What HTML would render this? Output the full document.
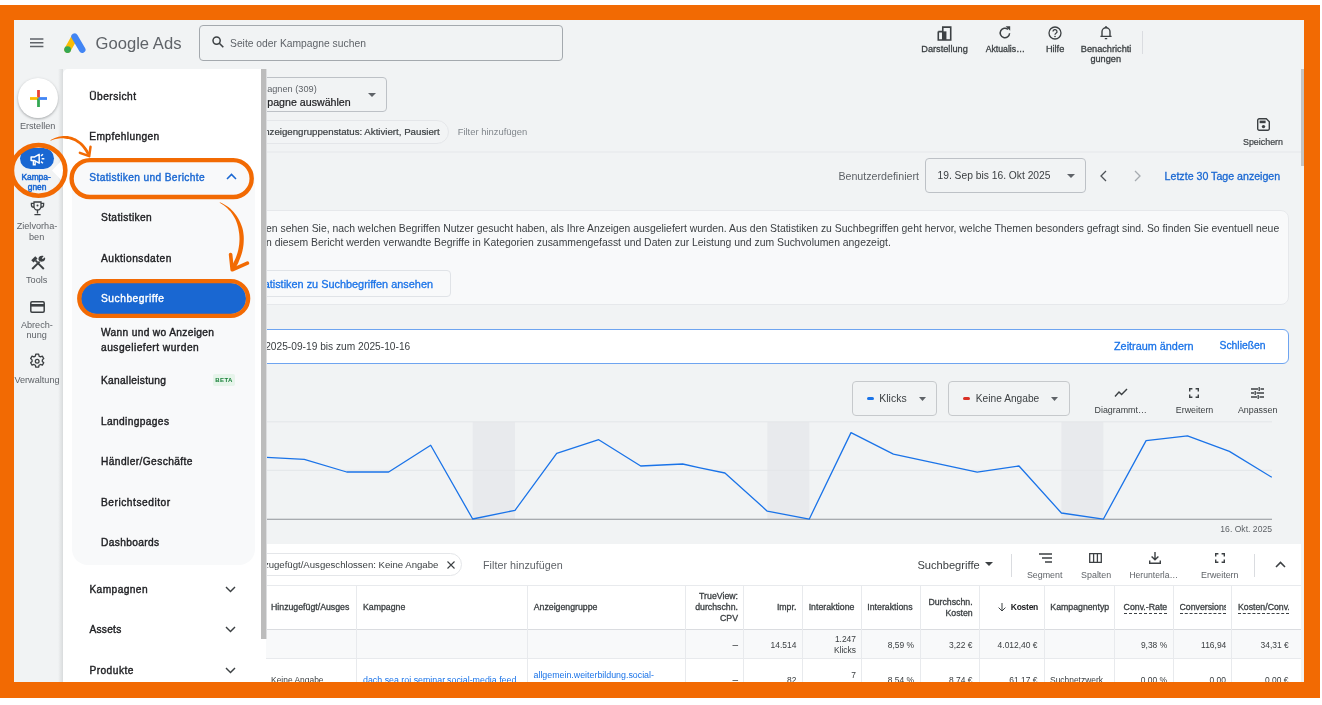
<!DOCTYPE html>
<html lang="de">
<head>
<meta charset="utf-8">
<title>Google Ads – Suchbegriffe</title>
<style>
*{box-sizing:border-box;margin:0;padding:0}
html,body{width:1322px;height:705px;overflow:hidden;background:#fff}
body{font-family:"Liberation Sans",sans-serif;color:#3c4043;position:relative}
#frame{position:absolute;left:0;top:5px;width:1320px;height:693px;background:#f26a03}
#app{position:absolute;left:14px;top:20px;width:1290px;height:662px;background:#f1f3f4;overflow:hidden}
/* coordinates inside #app are page coords shifted by (-14,-20); use wrapper to keep page coords */
#pg{position:absolute;left:-14px;top:-20px;width:1322px;height:705px;will-change:transform}
.a{position:absolute}
.t{position:absolute;white-space:nowrap;line-height:14px;height:14px}
.m{-webkit-text-stroke:0.3px currentColor}
.mp{-webkit-text-stroke:0.38px currentColor}
.m2{-webkit-text-stroke:0.5px currentColor}
.m3{-webkit-text-stroke:0.2px currentColor}
.r{text-align:right}
.c{text-align:center}
svg{position:absolute;overflow:visible}
</style>
</head>
<body>
<div id="frame"></div>
<div id="app"><div id="pg">

<!-- ===== header ===== -->
<div id="header">
  <svg style="left:30.300px;top:38px" width="14" height="10" viewBox="0 0 14 10"><path d="M0 1h13.400M0 4.700h13.400M0 8.400h13.400" stroke="#5f6368" stroke-width="1.500" fill="none"/></svg>
  <svg id="logo" style="left:63.200px;top:31.800px" width="24" height="22" viewBox="0 0 24 22">
    <path d="M4.6 17.6 L11.2 6" stroke="#fbbc04" stroke-width="6.6" stroke-linecap="round" fill="none"/>
    <path d="M11.6 4.6 L19.2 17.6" stroke="#4285f4" stroke-width="6.6" stroke-linecap="round" fill="none"/>
    <circle cx="4.6" cy="17.6" r="3.4" fill="#34a853"/>
  </svg>
  <div class="t" id="brand" style="left:95.5px;top:30.7px;font-size:16.63px;line-height:26px;height:26px;color:#5f6368;width:auto;text-align:left;letter-spacing:0.01px">Google Ads</div>
  <div class="a" id="search" style="left:199px;top:25px;width:364px;height:36px;border:1px solid #a4a9ae;border-radius:4px"></div>
  <svg style="left:212px;top:36px" width="12" height="12" viewBox="0 0 12 12"><circle cx="4.6" cy="4.6" r="3.6" stroke="#3c4043" stroke-width="1.5" fill="none"/><path d="M7.3 7.3 L11.3 11.3" stroke="#3c4043" stroke-width="1.6"/></svg>
  <div class="t" id="searchph" style="left:230.0px;top:37px;font-size:10.32px;color:#5f6368;width:auto;text-align:left;letter-spacing:0.00px">Seite oder Kampagne suchen</div>
</div>


<!-- ===== header right icons ===== -->
<div id="hdr-icons">
  <svg style="left:936.500px;top:25.500px" width="15" height="15" viewBox="0 0 14 14"><path d="M1.2 5.2h4.2M1.2 5.2V13h11.6V1H5.4v12" stroke="#3c4043" stroke-width="1.5" fill="none"/><path d="M5.4 1h7.4v12H5.4z" fill="#3c4043" opacity=".0"/><rect x="5.4" y="5" width="3.4" height="8" fill="#3c4043"/></svg>
  <div class="t c m" id="h1" style="left:921.3px;width:auto;top:42px;font-size:9.2px;color:#3c4043;text-align:left;letter-spacing:0px">Darstellung</div>
  <svg style="left:998px;top:26px" width="14" height="14" viewBox="0 0 14 14"><path d="M11.6 7.3A4.7 4.7 0 1 1 10 3.4" stroke="#3c4043" stroke-width="1.5" fill="none"/><path d="M7.600.200h4.600v4.600z" fill="#3c4043"/></svg>
  <div class="t c m" id="h2" style="left:985.7px;width:auto;top:42px;font-size:8.69px;color:#3c4043;text-align:left;letter-spacing:0.01px">Aktualis…</div>
  <svg style="left:1048px;top:26px" width="14" height="14" viewBox="0 0 14 14"><circle cx="7" cy="7" r="6" stroke="#3c4043" stroke-width="1.3" fill="none"/><path d="M5 5.6a2 2 0 1 1 3 1.7c-.7.4-1 .8-1 1.5" stroke="#3c4043" stroke-width="1.3" fill="none"/><circle cx="7" cy="10.5" r=".8" fill="#3c4043"/></svg>
  <div class="t c m" id="h3" style="left:1045.9px;width:auto;top:42px;font-size:9.2px;color:#3c4043;text-align:left;letter-spacing:0px">Hilfe</div>
  <svg style="left:1099px;top:25px" width="14" height="16" viewBox="0 0 14 16"><path d="M3 11V6.8a4 4 0 0 1 8 0V11M1.4 11.4h11.2" stroke="#3c4043" stroke-width="1.4" fill="none"/><path d="M7 1v2M5.8 13.6h2.4" stroke="#3c4043" stroke-width="1.4"/></svg>
  <div class="t c m" id="h4" style="left:1080.8px;width:auto;top:42px;font-size:9.2px;color:#3c4043;text-align:left;letter-spacing:0px">Benachrichti</div>
  <div class="t c m" id="h5" style="left:1090.4px;width:auto;top:52px;font-size:9.2px;color:#3c4043;text-align:left;letter-spacing:0px">gungen</div>
  <div class="a" style="left:1142px;top:31px;width:1px;height:23px;background:#dadce0"></div>
</div>

<!-- ===== left rail ===== -->
<div id="rail">
  <div class="a" style="left:58px;top:69px;width:5px;height:613px;background:linear-gradient(to right,rgba(60,64,67,0),rgba(60,64,67,.13))"></div>
  <div class="a" id="create" style="left:18px;top:78px;width:40px;height:40px;border-radius:50%;background:#fff;box-shadow:0 1px 3px rgba(60,64,67,.3),0 1px 2px rgba(60,64,67,.15)"></div>
  <svg style="left:29.500px;top:89.500px" width="17" height="17" viewBox="0 0 17 17"><path d="M7.100 0h2.800v8.500H7.100z" fill="#ea4335"/><path d="M0 7.100h8.500v2.800H0z" fill="#fbbc04"/><path d="M7.100 8.500h2.800V17H7.100z" fill="#34a853"/><path d="M8.500 7.100H17v2.800H8.500z" fill="#4285f4"/></svg>
  <div class="t c" id="r1" style="left:19.9px;width:auto;top:119px;font-size:9.15px;color:#5f6368;text-align:left;letter-spacing:0px">Erstellen</div>

  <div class="a" style="left:20px;top:148px;width:34px;height:21px;border-radius:11px;background:#1967d2"></div>
  <svg style="left:29.500px;top:151.800px" width="16.800" height="14.600" viewBox="0 0 15 13"><path d="M1 4.4h3.2L8.2 2v8L4.2 7.6H1z" stroke="#fff" stroke-width="1.3" fill="none" stroke-linejoin="round"/><path d="M3 8v3.4h1.6V8" stroke="#fff" stroke-width="1.2" fill="none"/><path d="M10.4 6h2.4M9.8 3.4l1.8-1.4M9.8 8.6l1.8 1.4" stroke="#fff" stroke-width="1.3"/></svg>
  <div class="t c m2" id="r2" style="left:21.4px;width:auto;top:169.8px;font-size:8.4px;color:#1967d2;text-align:left;letter-spacing:0px">Kampa-</div>
  <div class="t c m2" id="r3" style="left:27.8px;width:auto;top:180.3px;font-size:8.4px;color:#1967d2;text-align:left;letter-spacing:0px">gnen</div>
  <svg style="left:0;top:0" width="70" height="200" viewBox="0 0 70 200"><path d="M63.500 158.500L52 170.400 63.500 182.300z" fill="#fff"/></svg>

  <svg style="left:30px;top:201px" width="15" height="16" viewBox="0 0 15 16"><path d="M4 1h7v4.5a3.5 3.5 0 0 1-7 0zM4 2.4H1.4v1.4A2.6 2.6 0 0 0 4 6.4M11 2.4h2.6v1.4A2.6 2.6 0 0 1 11 6.4M7.5 9v3.4M4.4 13.6h6.2" stroke="#3c4043" stroke-width="1.3" fill="none"/><circle cx="7.5" cy="4.6" r="1" fill="#3c4043"/></svg>
  <div class="t c" id="r4" style="left:16.7px;width:auto;top:219px;font-size:9.15px;color:#5f6368;text-align:left;letter-spacing:0px">Zielvorha-</div>
  <div class="t c" id="r5" style="left:29.0px;width:auto;top:230px;font-size:9.15px;color:#5f6368;text-align:left;letter-spacing:0px">ben</div>

  <svg style="left:29.500px;top:255px" width="16" height="16" viewBox="0 0 16 16"><path d="M2.200 14L9.600 6.600" stroke="#3c4043" stroke-width="1.900" fill="none"/><path d="M9 4.200a2.900 2.900 0 0 1 3.800-2.800L11 3.200l1.800 1.800 1.800-1.800A2.900 2.900 0 0 1 9 4.200z" fill="#3c4043" stroke="#3c4043" stroke-width="1.200" stroke-linejoin="round"/><path d="M13.800 14L7.400 7.600" stroke="#3c4043" stroke-width="1.900" fill="none"/><path d="M2.400 6.400l4-4" stroke="#3c4043" stroke-width="3.200" fill="none"/><path d="M5.400 5.400l2 2" stroke="#3c4043" stroke-width="1.900"/></svg>
  <div class="t c" id="r6" style="left:26.0px;width:auto;top:273px;font-size:9.15px;color:#5f6368;text-align:left;letter-spacing:0px">Tools</div>

  <svg style="left:30px;top:301px" width="15" height="12" viewBox="0 0 15 12"><rect x=".8" y=".8" width="13.4" height="10.4" rx="1.2" stroke="#3c4043" stroke-width="1.5" fill="none"/><rect x=".8" y="3" width="13.4" height="2.6" fill="#3c4043"/></svg>
  <div class="t c" id="r7" style="left:20.9px;width:auto;top:318px;font-size:9.15px;color:#5f6368;text-align:left;letter-spacing:0px">Abrech-</div>
  <div class="t c" id="r8" style="left:26.5px;width:auto;top:328px;font-size:9.15px;color:#5f6368;text-align:left;letter-spacing:0px">nung</div>

  <svg style="left:29.300px;top:353.300px" width="16.400" height="16.400" viewBox="0 0 15 15"><path d="M6.2 1h2.6l.4 1.8 1.3.7 1.7-.6 1.3 2.2-1.3 1.2v1.4l1.3 1.2-1.3 2.2-1.7-.6-1.3.7-.4 1.8H6.200l-.4-1.800-1.300-.7-1.700.6-1.300-2.200 1.300-1.200V6.300L1.500 5.100l1.300-2.200 1.700.6 1.300-.7z" stroke="#3c4043" stroke-width="1.2" fill="none" stroke-linejoin="round"/><circle cx="7.500" cy="7.500" r="1.700" stroke="#3c4043" stroke-width="1.200" fill="none"/></svg>
  <div class="t c" id="r9" style="left:14.4px;width:auto;top:373px;font-size:9.15px;color:#5f6368;text-align:left;letter-spacing:0px">Verwaltung</div>
</div>



<!-- ===== main content ===== -->
<div id="main">
  <!-- page scrollbar -->
  <div class="a" style="left:1301px;top:69px;width:3px;height:97px;background:#c4c4c4"></div>

  <!-- campaign selector -->
  <div class="a" style="left:200px;top:77px;width:187px;height:35px;border:1px solid #bdc1c6;border-radius:4px"></div>
  <div class="t" id="c1" style="left:auto;top:82px;font-size:9.2px;color:#5f6368;right:1005.3px">Kampagnen (309)</div>
  <div class="t m3" id="c2" style="left:auto;top:94.5px;font-size:10.65px;color:#202124;right:971.3px">Kampagne auswählen</div>
  <svg style="left:368px;top:93px" width="8" height="4" viewBox="0 0 8 4"><path d="M0 0h8L4 4z" fill="#5f6368"/></svg>

  <!-- filter row -->
  <div class="a" style="left:180px;top:120px;width:269px;height:24px;border:1px solid #e4e6e9;border-radius:12px;background:#f2f4f5"></div>
  <div class="t m3" id="f1" style="left:auto;top:125px;font-size:9.7px;color:#3c4043;right:882.3px">Anzeigengruppenstatus: Aktiviert, Pausiert</div>
  <div class="t" id="f2" style="left:457.7px;top:125px;font-size:9.41px;color:#80868b;width:auto;text-align:left;letter-spacing:0.00px">Filter hinzufügen</div>
  <svg style="left:1257px;top:118px" width="13" height="13" viewBox="0 0 13 13"><path d="M1.600.8h7.800l2.800 2.800v7a1.600 1.600 0 0 1-1.600 1.600H1.600" stroke="#3c4043" stroke-width="0" fill="none"/><path d="M2.200.7h7.100l3 3v7.100a1.500 1.500 0 0 1-1.500 1.500H2.200A1.500 1.500 0 0 1 .7 10.800V2.200A1.500 1.500 0 0 1 2.200.7z" stroke="#3c4043" stroke-width="1.400" fill="none"/><rect x="2.600" y="2.600" width="6" height="2.600" fill="#3c4043"/><circle cx="6.500" cy="8.600" r="1.700" fill="#3c4043"/></svg>
  <div class="t c m3" id="f3" style="left:1243.0px;width:auto;top:135px;font-size:8.9px;color:#3c4043;text-align:left;letter-spacing:0px">Speichern</div>
  <div class="a" style="left:267px;top:151px;width:1034px;height:2px;background:#ebedef"></div>

  <!-- date row -->
  <div class="t r" id="d1" style="left:838.4px;width:auto;top:169px;font-size:10.66px;color:#5f6368;text-align:left;letter-spacing:0.00px">Benutzerdefiniert</div>
  <div class="a" style="left:925px;top:158px;width:161px;height:35px;border:1px solid #bdc1c6;border-radius:4px"></div>
  <div class="t" id="d2" style="left:937.5px;top:169px;font-size:10.27px;color:#3c4043;width:auto;text-align:left;letter-spacing:0.00px">19. Sep bis 16. Okt 2025</div>
  <svg style="left:1067px;top:174px" width="8" height="4" viewBox="0 0 8 4"><path d="M0 0h8L4 4z" fill="#5f6368"/></svg>
  <svg style="left:1100px;top:170px" width="7" height="12" viewBox="0 0 7 12"><path d="M6 1L1 6l5 5" stroke="#4d5156" stroke-width="1.300" fill="none"/></svg>
  <svg style="left:1134px;top:170px" width="7" height="12" viewBox="0 0 7 12"><path d="M1 1l5 5-5 5" stroke="#a6abb0" stroke-width="1.300" fill="none"/></svg>
  <div class="t m" id="d3" style="left:1164.6px;top:169px;font-size:10.63px;color:#1967d2;width:auto;text-align:left;letter-spacing:0.00px">Letzte 30 Tage anzeigen</div>

  <!-- info card -->
  <div class="a" style="left:200px;top:210px;width:1089px;height:95px;border:1px solid #e6e8eb;border-radius:8px;background:#f8f9fa"></div>
  <div class="t" id="i1" style="left:266.0px;top:222px;font-size:10.4px;color:#3c4043;width:auto;text-align:left;letter-spacing:0px">en sehen Sie, nach welchen Begriffen Nutzer gesucht haben, als Ihre Anzeigen ausgeliefert wurden. Aus den Statistiken zu Suchbegriffen geht hervor, welche Themen besonders gefragt sind. So finden Sie eventuell neue</div>
  <div class="t" id="i2" style="left:266.0px;top:236px;font-size:10.4px;color:#3c4043;width:auto;text-align:left;letter-spacing:0px">n diesem Bericht werden verwandte Begriffe in Kategorien zusammengefasst und Daten zur Leistung und zum Suchvolumen angezeigt.</div>
  <div class="a" style="left:200px;top:270px;width:250.500px;height:27px;border:1px solid #e0e3e7;border-radius:4px"></div>
  <div class="t m" id="i3" style="left:auto;top:277px;font-size:10.9px;color:#1a73e8;right:889.0px">Statistiken zu Suchbegriffen ansehen</div>

  <!-- compare bar -->
  <div class="a" style="left:200px;top:329px;width:1089px;height:35px;border:1px solid #6ea4f0;border-radius:6px;background:#fff"></div>
  <div class="t" id="b1" style="left:265.2px;top:339.7px;font-size:10.19px;color:#3c4043;width:auto;text-align:left;letter-spacing:0.01px">2025-09-19 bis zum 2025-10-16</div>
  <div class="t m" id="b2" style="left:1114.0px;top:339px;font-size:10.85px;color:#1a73e8;width:auto;text-align:left;letter-spacing:0.00px">Zeitraum ändern</div>
  <div class="t m" id="b3" style="left:1219.5px;top:339px;font-size:10.36px;color:#1a73e8;width:auto;text-align:left;letter-spacing:0.00px">Schließen</div>

  <!-- chart controls -->
  <div class="a" style="left:852px;top:381px;width:85px;height:35px;border:1px solid #c6c9cc;border-radius:4px"></div>
  <div class="a" style="left:867px;top:397px;width:7px;height:3px;border-radius:1.500px;background:#1a73e8"></div>
  <div class="t" id="k1" style="left:879.3px;top:391.500px;font-size:10.45px;color:#3c4043;width:auto;text-align:left;letter-spacing:0.01px">Klicks</div>
  <svg style="left:918.500px;top:397px" width="7" height="4" viewBox="0 0 7 4"><path d="M0 0h7L3.500 4z" fill="#5f6368"/></svg>
  <div class="a" style="left:948px;top:381px;width:121.500px;height:35px;border:1px solid #c6c9cc;border-radius:4px"></div>
  <div class="a" style="left:962.500px;top:397px;width:7px;height:3px;border-radius:1.500px;background:#d93025"></div>
  <div class="t" id="k2" style="left:975.8px;top:391.500px;font-size:10.19px;color:#3c4043;width:auto;text-align:left;letter-spacing:0.01px">Keine Angabe</div>
  <svg style="left:1051px;top:397px" width="7" height="4" viewBox="0 0 7 4"><path d="M0 0h7L3.500 4z" fill="#5f6368"/></svg>

  <svg style="left:1114px;top:388px" width="14" height="10" viewBox="0 0 14 10"><path d="M1 8.500l4-4.500 2.600 2.600L13 1" stroke="#3c4043" stroke-width="1.400" fill="none"/></svg>
  <div class="t c" id="k3" style="left:1094.5px;width:auto;top:403px;font-size:8.9px;color:#3c4043;text-align:left;letter-spacing:0px">Diagrammt…</div>
  <svg style="left:1189px;top:388px" width="10" height="10" viewBox="0 0 10 10"><path d="M.700 3.400V.700h2.700M6.600.700h2.700v2.700M9.300 6.600v2.700H6.600M3.400 9.300H.700V6.600" stroke="#3c4043" stroke-width="1.400" fill="none"/></svg>
  <div class="t c" id="k4" style="left:1175.8px;width:auto;top:403px;font-size:8.9px;color:#3c4043;text-align:left;letter-spacing:0px">Erweitern</div>
  <svg style="left:1251px;top:387px" width="13" height="12" viewBox="0 0 13 12"><path d="M0 2h7M9.500 2H13M0 6h3M5.500 6H13M0 10h6M8.500 10H13M8.200 0v4M4.200 4v4M7.200 8v4" stroke="#3c4043" stroke-width="1.300" fill="none"/></svg>
  <div class="t c" id="k5" style="left:1237.9px;width:auto;top:403px;font-size:8.9px;color:#3c4043;text-align:left;letter-spacing:0px">Anpassen</div>

  <!-- chart -->
  <svg id="chart" style="left:0;top:0" width="1322" height="705" viewBox="0 0 1322 705">
    <rect x="472.700" y="422" width="42.300" height="97" fill="#e8eaed"/>
    <rect x="767.300" y="422" width="42" height="97" fill="#e8eaed"/>
    <rect x="1061.400" y="422" width="42" height="97" fill="#e8eaed"/>
    <path d="M200 421.800H1272M200 470.300H1272" stroke="#e3e5e8" stroke-width="1"/>
    <path d="M200 519.200H1272" stroke="#8f9398" stroke-width="1.100"/>
    <polyline fill="none" stroke="#1a73e8" stroke-width="1.300" stroke-linejoin="round" points="224,455 266.700,457.300 304.300,459.300 346.700,472 388.700,472 430.700,445.300 472.700,519 515,510.300 556.700,453.300 598.700,439.700 640.700,466 682.700,464 700,467.800 724.900,473 767.300,511.200 809.200,519.200 851,432.600 893.400,454.200 935.300,463.200 977.200,472.100 1019,466 1061.400,513 1103.300,519.200 1146.100,440.600 1187.500,435.900 1229.400,451.400 1271.800,477.300"/>
  </svg>
  <div class="t r" id="ch1" style="left:1220.3px;width:auto;top:521.500px;font-size:8.61px;color:#5f6368;text-align:left;letter-spacing:0.01px">16. Okt. 2025</div>

  <!-- table -->
  <div class="a" style="left:200px;top:543.500px;width:1101px;height:140px;background:#fff"></div>
  <div class="a" style="left:200px;top:629px;width:1101px;height:30px;background:#f8f9fa;border-top:1px solid #dadce0;border-bottom:1px solid #e8eaed"></div>
  <div class="a" style="left:200px;top:585px;width:1101px;height:1px;background:#e8eaed"></div>

  <!-- table toolbar -->
  <div class="a" style="left:200px;top:553px;width:262px;height:23px;border:1px solid #e4e6e9;border-radius:12px;background:#fff"></div>
  <div class="t" id="tb1" style="left:auto;top:557.500px;font-size:9.6px;color:#3c4043;right:883.7px">Hinzugefügt/Ausgeschlossen: Keine Angabe</div>
  <svg style="left:447px;top:561px" width="8" height="8" viewBox="0 0 8 8"><path d="M.500.500l7 7M7.500.500l-7 7" stroke="#3c4043" stroke-width="1.100"/></svg>
  <div class="t" id="tb2" style="left:483.0px;top:557.500px;font-size:10.78px;color:#5f6368;width:auto;text-align:left;letter-spacing:0.01px">Filter hinzufügen</div>
  <div class="t" id="tb3" style="left:917.4px;top:557.500px;font-size:11.13px;color:#3c4043;width:auto;text-align:left;letter-spacing:0.00px">Suchbegriffe</div>
  <svg style="left:985px;top:562px" width="8" height="4" viewBox="0 0 8 4"><path d="M0 0h8L4 4z" fill="#3c4043"/></svg>
  <div class="a" style="left:1011px;top:553.500px;width:1px;height:23px;background:#dadce0"></div>
  <svg style="left:1039px;top:553px" width="13" height="10" viewBox="0 0 13 10"><path d="M0 1h13M3 5h10M6 9h7" stroke="#3c4043" stroke-width="1.400"/></svg>
  <div class="t c" id="tb4" style="left:1026.9px;width:auto;top:567.500px;font-size:8.9px;color:#5f6368;text-align:left;letter-spacing:0px">Segment</div>
  <svg style="left:1089px;top:553px" width="13" height="10" viewBox="0 0 13 10"><path d="M.700.700h11.600v8.600H.700zM4.600.700v8.600M8.400.700v8.600" stroke="#3c4043" stroke-width="1.300" fill="none"/></svg>
  <div class="t c" id="tb5" style="left:1081.1px;width:auto;top:567.500px;font-size:8.9px;color:#5f6368;text-align:left;letter-spacing:0px">Spalten</div>
  <svg style="left:1149px;top:552px" width="12" height="12" viewBox="0 0 12 12"><path d="M6 0v7.500M2.600 4.400L6 7.800l3.400-3.400M.700 8.600v2.600h10.600V8.600" stroke="#3c4043" stroke-width="1.400" fill="none"/></svg>
  <div class="t c" id="tb6" style="left:1129.4px;width:auto;top:567.500px;font-size:8.57px;color:#5f6368;text-align:left;letter-spacing:0.01px">Herunterla…</div>
  <svg style="left:1215px;top:553px" width="10" height="10" viewBox="0 0 10 10"><path d="M.700 3.400V.700h2.700M6.600.700h2.700v2.700M9.300 6.600v2.700H6.600M3.400 9.300H.700V6.600" stroke="#3c4043" stroke-width="1.400" fill="none"/></svg>
  <div class="t c" id="tb7" style="left:1201.0px;width:auto;top:567.500px;font-size:8.9px;color:#5f6368;text-align:left;letter-spacing:0px">Erweitern</div>
  <div class="a" style="left:1254px;top:553.500px;width:1px;height:23px;background:#dadce0"></div>
  <svg style="left:1275px;top:561px" width="11" height="7" viewBox="0 0 11 7"><path d="M1 6l4.500-4.600L10 6" stroke="#3c4043" stroke-width="1.500" fill="none"/></svg>

  <!-- column separators -->
  <div id="vlines">
    <div class="a" style="left:356px;top:585px;width:1px;height:97px;background:#e8eaed"></div>
    <div class="a" style="left:527px;top:585px;width:1px;height:97px;background:#e8eaed"></div>
    <div class="a" style="left:685px;top:585px;width:1px;height:97px;background:#e8eaed"></div>
    <div class="a" style="left:743px;top:585px;width:1px;height:97px;background:#e8eaed"></div>
    <div class="a" style="left:802px;top:585px;width:1px;height:97px;background:#e8eaed"></div>
    <div class="a" style="left:861px;top:585px;width:1px;height:97px;background:#e8eaed"></div>
    <div class="a" style="left:920px;top:585px;width:1px;height:97px;background:#e8eaed"></div>
    <div class="a" style="left:979px;top:585px;width:1px;height:97px;background:#e8eaed"></div>
    <div class="a" style="left:1044px;top:585px;width:1px;height:97px;background:#e8eaed"></div>
    <div class="a" style="left:1114px;top:585px;width:1px;height:97px;background:#e8eaed"></div>
    <div class="a" style="left:1173px;top:585px;width:1px;height:97px;background:#e8eaed"></div>
    <div class="a" style="left:1231px;top:585px;width:1px;height:97px;background:#e8eaed"></div>
  </div>

  <!-- header row -->
  <div class="t m" id="th1" style="left:271.0px;top:600px;font-size:8.75px;color:#3c4043;width:auto;text-align:left;letter-spacing:0px">Hinzugefügt/Ausges</div>
  <div class="t m" id="th2" style="left:363.0px;top:600px;font-size:8.75px;color:#3c4043;width:auto;text-align:left;letter-spacing:0px">Kampagne</div>
  <div class="t m" id="th3" style="left:533.7px;top:600px;font-size:8.75px;color:#3c4043;width:auto;text-align:left;letter-spacing:0px">Anzeigengruppe</div>
  <div class="t m r" id="th4a" style="left:699.1px;width:auto;top:589px;font-size:8.75px;color:#3c4043;text-align:left;letter-spacing:0px">TrueView:</div>
  <div class="t m r" id="th4b" style="left:695.2px;width:auto;top:600px;font-size:8.75px;color:#3c4043;text-align:left;letter-spacing:0px">durchschn.</div>
  <div class="t m r" id="th4c" style="left:720.0px;width:auto;top:611px;font-size:8.75px;color:#3c4043;text-align:left;letter-spacing:0px">CPV</div>
  <div class="t m r" id="th5" style="left:776.9px;width:auto;top:600px;font-size:8.75px;color:#3c4043;text-align:left;letter-spacing:0px">Impr.</div>
  <div class="t m" id="th6" style="left:808.7px;top:600px;font-size:8.75px;color:#3c4043;width:auto;text-align:left;letter-spacing:0px">Interaktione</div>
  <div class="t m" id="th7" style="left:867.3px;top:600px;font-size:8.75px;color:#3c4043;width:auto;text-align:left;letter-spacing:0px">Interaktions</div>
  <div class="t m r" id="th8a" style="left:928.4px;width:auto;top:594.500px;font-size:8.75px;color:#3c4043;text-align:left;letter-spacing:0px">Durchschn.</div>
  <div class="t m r" id="th8b" style="left:945.5px;width:auto;top:605.500px;font-size:8.75px;color:#3c4043;text-align:left;letter-spacing:0px">Kosten</div>
  <svg style="left:998px;top:603px" width="8" height="9" viewBox="0 0 8 9"><path d="M4 0v8M.600 4.600L4 8l3.400-3.400" stroke="#3c4043" stroke-width="1" fill="none"/></svg>
  <div class="t r" id="th9" style="left:auto;width:auto;top:600px;font-size:8.5px;font-weight:bold;color:#202124;text-align:left;letter-spacing:-0.25px;right:283.95px">Kosten</div>
  <div class="t m" id="th10" style="left:1050.3px;top:600px;font-size:8.75px;color:#3c4043;width:auto;text-align:left;letter-spacing:0px">Kampagnentyp</div>
  <div class="t m r" id="th11" style="left:1123.6px;width:auto;top:600px;font-size:8.75px;color:#3c4043;border-bottom:1px dashed #3c4043;text-align:left;letter-spacing:0px">Conv.-Rate</div>
  <div class="t m" id="th12" style="left:1179.5px;top:600px;font-size:8.75px;color:#3c4043;border-bottom:1px dashed #3c4043;width:46.8px;overflow:hidden;letter-spacing:0px">Conversions</div>
  <div class="t m" id="th13" style="left:1238px;top:600px;font-size:8.75px;color:#3c4043;border-bottom:1px dashed #3c4043;width:50.8px;overflow:hidden;letter-spacing:0px">Kosten/Conv.</div>

  <!-- total row -->
  <div class="t r" id="tr1" style="left:638px;width:100px;top:638px;font-size:10px;color:#3c4043;letter-spacing:0px">–</div>
  <div class="t r" id="tr2" style="left:770.6px;width:auto;top:638px;font-size:8.45px;color:#3c4043;text-align:left;letter-spacing:0px">14.514</div>
  <div class="t r" id="tr3a" style="left:756px;width:100px;top:631.500px;font-size:8.45px;color:#3c4043;letter-spacing:0px">1.247</div>
  <div class="t r" id="tr3b" style="left:756px;width:100px;top:642.500px;font-size:8.45px;color:#3c4043;letter-spacing:0px">Klicks</div>
  <div class="t r" id="tr4" style="left:814px;width:100px;top:638px;font-size:8.45px;color:#3c4043;letter-spacing:0px">8,59 %</div>
  <div class="t r" id="tr5" style="left:872.500px;width:100px;top:638px;font-size:8.45px;color:#3c4043;letter-spacing:0px">3,22 €</div>
  <div class="t r" id="tr6" style="left:937.500px;width:100px;top:638px;font-size:8.45px;color:#3c4043;letter-spacing:0px">4.012,40 €</div>
  <div class="t r" id="tr7" style="left:1140.9px;width:auto;top:638px;font-size:8.45px;color:#3c4043;text-align:left;letter-spacing:0px">9,38 %</div>
  <div class="t r" id="tr8" style="left:1201.1px;width:auto;top:638px;font-size:8.45px;color:#3c4043;text-align:left;letter-spacing:0px">116,94</div>
  <div class="t r" id="tr9" style="left:1260.6px;width:auto;top:638px;font-size:8.45px;color:#3c4043;text-align:left;letter-spacing:0px">34,31 €</div>

  <!-- first data row (cut off) -->
  <div class="t" id="td1" style="left:271px;top:673px;font-size:8.45px;color:#3c4043;letter-spacing:0px">Keine Angabe</div>
  <div class="t" id="td2" style="left:363px;top:673px;font-size:8.85px;color:#1a73e8;letter-spacing:0px">dach.sea.roi.seminar.social-media.feed</div>
  <div class="t" id="td3" style="left:533.500px;top:668px;font-size:8.85px;color:#1a73e8;letter-spacing:0px">allgemein.weiterbildung.social-</div>
  <div class="t" id="td3b" style="left:533.500px;top:680px;font-size:8.85px;color:#1a73e8;letter-spacing:0px">media-feed</div>
  <div class="t r" id="td4" style="left:638px;width:100px;top:673px;font-size:10px;color:#3c4043;letter-spacing:0px">–</div>
  <div class="t r" id="td5" style="left:696.500px;width:100px;top:673px;font-size:8.45px;color:#3c4043;letter-spacing:0px">82</div>
  <div class="t r" id="td6a" style="left:756px;width:100px;top:667.500px;font-size:8.45px;color:#3c4043;letter-spacing:0px">7</div>
  <div class="t r" id="td6b" style="left:756px;width:100px;top:678.500px;font-size:8.45px;color:#3c4043;letter-spacing:0px">Klicks</div>
  <div class="t r" id="td7" style="left:814px;width:100px;top:673px;font-size:8.45px;color:#3c4043;letter-spacing:0px">8,54 %</div>
  <div class="t r" id="td8" style="left:872.500px;width:100px;top:673px;font-size:8.45px;color:#3c4043;letter-spacing:0px">8,74 €</div>
  <div class="t r" id="td9" style="left:937.500px;width:100px;top:673px;font-size:8.45px;color:#3c4043;letter-spacing:0px">61,17 €</div>
  <div class="t" id="td10" style="left:1050px;top:673px;font-size:8.45px;color:#3c4043;letter-spacing:0px">Suchnetzwerk</div>
  <div class="t r" id="td11" style="left:1067px;width:100px;top:673px;font-size:8.45px;color:#3c4043;letter-spacing:0px">0,00 %</div>
  <div class="t r" id="td12" style="left:1126px;width:100px;top:673px;font-size:8.45px;color:#3c4043;letter-spacing:0px">0,00</div>
  <div class="t r" id="td13" style="left:1188.500px;width:100px;top:673px;font-size:8.45px;color:#3c4043;letter-spacing:0px">0,00 €</div>
</div>

<!-- ===== side panel ===== -->
<div id="panel">
  <div class="a" style="left:63px;top:69px;width:203px;height:613px;background:#fff;border-top-left-radius:5px"></div>
  <div class="a" style="left:72px;top:160px;width:183px;height:405px;background:#f8f9fa;border-radius:20px 20px 16px 16px"></div>
  <div class="a" id="sb1" style="left:261px;top:69px;width:5px;height:570px;background:#bcbcbc"></div><div class="a" style="left:266px;top:69px;width:1px;height:570px;background:#dcdddf"></div>

  <div class="t mp" id="p1" style="left:89.3px;top:89.6px;font-size:10.2px;color:#202124;width:auto;text-align:left;letter-spacing:0.46px">Übersicht</div>
  <div class="t mp" id="p2" style="left:89.3px;top:129.6px;font-size:10.2px;color:#202124;width:auto;text-align:left;letter-spacing:0.39px">Empfehlungen</div>
  <div class="t mp" id="p3" style="left:89.3px;top:170.6px;font-size:10.2px;color:#1967d2;width:auto;text-align:left;letter-spacing:0.36px">Statistiken und Berichte</div>
  <svg style="left:226px;top:173px" width="11" height="7" viewBox="0 0 11 7"><path d="M1 6l4.500-4.600L10 6" stroke="#1967d2" stroke-width="1.500" fill="none"/></svg>

  <div class="t mp" id="p4" style="left:101.0px;top:210.6px;font-size:10.2px;color:#202124;width:auto;text-align:left;letter-spacing:0.37px">Statistiken</div>
  <div class="t mp" id="p5" style="left:101.0px;top:251.6px;font-size:10.2px;color:#202124;width:auto;text-align:left;letter-spacing:0.48px">Auktionsdaten</div>
  <div class="a" style="left:81.3px;top:283.4px;width:164.7px;height:30.2px;border-radius:15.1px;background:#1967d2"></div>
  <div class="t mp" id="p6" style="left:101.0px;top:291.6px;font-size:10.2px;color:#fff;width:auto;text-align:left;letter-spacing:0.54px">Suchbegriffe</div>
  <div class="t mp" id="p7" style="left:101.0px;top:325.6px;font-size:10.2px;color:#202124;width:auto;text-align:left;letter-spacing:0.33px">Wann und wo Anzeigen</div>
  <div class="t mp" id="p8" style="left:101.0px;top:340.6px;font-size:10.2px;color:#202124;width:auto;text-align:left;letter-spacing:0.49px">ausgeliefert wurden</div>
  <div class="t mp" id="p9" style="left:101.0px;top:373.6px;font-size:10.2px;color:#202124;width:auto;text-align:left;letter-spacing:0.32px">Kanalleistung</div>
  <div class="a" style="left:213px;top:374px;width:22px;height:12px;border-radius:2px;background:#e6f4ea"></div>
  <div class="t c" id="p9b" style="left:213px;width:22px;top:373px;font-size:6px;font-weight:bold;letter-spacing:.4px;color:#188038">BETA</div>
  <div class="t mp" id="p10" style="left:101.0px;top:414.6px;font-size:10.2px;color:#202124;width:auto;text-align:left;letter-spacing:0.36px">Landingpages</div>
  <div class="t mp" id="p11" style="left:101.0px;top:454.6px;font-size:10.2px;color:#202124;width:auto;text-align:left;letter-spacing:0.41px">Händler/Geschäfte</div>
  <div class="t mp" id="p12" style="left:101.0px;top:495.6px;font-size:10.2px;color:#202124;width:auto;text-align:left;letter-spacing:0.53px">Berichtseditor</div>
  <div class="t mp" id="p13" style="left:101.0px;top:535.6px;font-size:10.2px;color:#202124;width:auto;text-align:left;letter-spacing:0.34px">Dashboards</div>

  <div class="t mp" id="p14" style="left:89.4px;top:582.6px;font-size:10.2px;color:#202124;width:auto;text-align:left;letter-spacing:0.41px">Kampagnen</div>
  <svg style="left:225px;top:586px" width="11" height="7" viewBox="0 0 11 7"><path d="M1 1l4.500 4.600L10 1" stroke="#3c4043" stroke-width="1.400" fill="none"/></svg>
  <div class="t mp" id="p15" style="left:89.4px;top:622.6px;font-size:10.2px;color:#202124;width:auto;text-align:left;letter-spacing:0.26px">Assets</div>
  <svg style="left:225px;top:626px" width="11" height="7" viewBox="0 0 11 7"><path d="M1 1l4.500 4.600L10 1" stroke="#3c4043" stroke-width="1.400" fill="none"/></svg>
  <div class="t mp" id="p16" style="left:89.4px;top:663.6px;font-size:10.2px;color:#202124;width:auto;text-align:left;letter-spacing:0.46px">Produkte</div>
  <svg style="left:225px;top:667px" width="11" height="7" viewBox="0 0 11 7"><path d="M1 1l4.500 4.600L10 1" stroke="#3c4043" stroke-width="1.400" fill="none"/></svg>
</div>

<!-- ===== orange annotations ===== -->
<svg id="anno" style="left:0;top:0" width="1322" height="705" viewBox="0 0 1322 705" fill="none" stroke="#f26a03" stroke-width="4.4" stroke-linecap="round" stroke-linejoin="round">
  <ellipse cx="38.6" cy="170.4" rx="26.7" ry="25.3" stroke-width="4.6"/>
  <rect x="71.6" y="160.1" width="180.1" height="36.9" rx="18.4"/>
  <rect x="79.3" y="281.1" width="168.8" height="34.8" rx="17.4"/>
  <path d="M50.5 140.8 L51.8 140.2 L53.2 139.7 L54.5 139.3 L55.9 139.0 L57.3 138.7 L58.7 138.5 L60.2 138.3 L61.6 138.3 L63.1 138.3 L64.5 138.5 L65.9 138.7 L67.4 138.9 L68.8 139.1 L70.2 139.5 L71.6 139.9 L73.0 140.5 L74.4 141.1 L75.8 141.8 L77.1 142.7 L78.4 143.6 L79.7 144.6 L80.9 145.8 L82.1 147.1 L83.2 148.4 L84.3 149.9 L85.3 151.5 L86.3 153.2 L87.2 155.1 L89.8 153.9 L88.8 151.9 L87.7 150.1 L86.6 148.3 L85.4 146.7 L84.2 145.2 L82.9 143.8 L81.5 142.5 L80.1 141.4 L78.7 140.4 L77.2 139.4 L75.7 138.6 L74.1 137.9 L72.6 137.3 L71.0 136.8 L69.4 136.4 L67.8 136.1 L66.2 135.9 L64.6 135.9 L63.0 136.0 L61.5 136.2 L59.9 136.4 L58.4 136.8 L57.0 137.2 L55.5 137.7 L54.1 138.3 L52.8 138.9 L51.5 139.6 L50.3 140.4Z" fill="#f26a03" stroke="none"/>
  <path d="M79.9 152.8 L89.2 156.2 L90.5 146.8" stroke-width="2.5"/>
  <path d="M219.7 202.7 L221.7 203.9 L223.7 205.2 L225.6 206.7 L227.3 208.2 L228.9 209.9 L230.5 211.6 L231.9 213.5 L233.2 215.5 L234.4 217.5 L235.5 219.6 L236.4 221.8 L237.2 224.1 L237.9 226.4 L238.4 228.8 L238.8 231.2 L239.2 233.7 L239.4 236.3 L239.5 238.9 L239.4 241.5 L239.2 244.2 L238.8 246.9 L238.3 249.7 L237.6 252.5 L236.7 255.3 L235.6 258.2 L234.3 261.1 L232.8 264.0 L231.2 266.9 L234.8 269.1 L236.6 266.0 L238.2 262.9 L239.5 259.8 L240.7 256.8 L241.7 253.7 L242.5 250.7 L243.1 247.6 L243.5 244.7 L243.7 241.7 L243.8 238.8 L243.7 236.0 L243.4 233.2 L243.0 230.5 L242.3 227.8 L241.4 225.3 L240.4 222.8 L239.3 220.5 L238.1 218.2 L236.7 216.1 L235.2 214.0 L233.6 212.1 L231.9 210.3 L230.2 208.6 L228.3 207.1 L226.3 205.7 L224.2 204.4 L222.1 203.3 L219.9 202.3Z" fill="#f26a03" stroke="none"/>
  <path d="M230.6 254.5 L232.2 269.8 L247.4 263.2" stroke-width="3.6"/>
</svg>

</div></div>
</body>
</html>
